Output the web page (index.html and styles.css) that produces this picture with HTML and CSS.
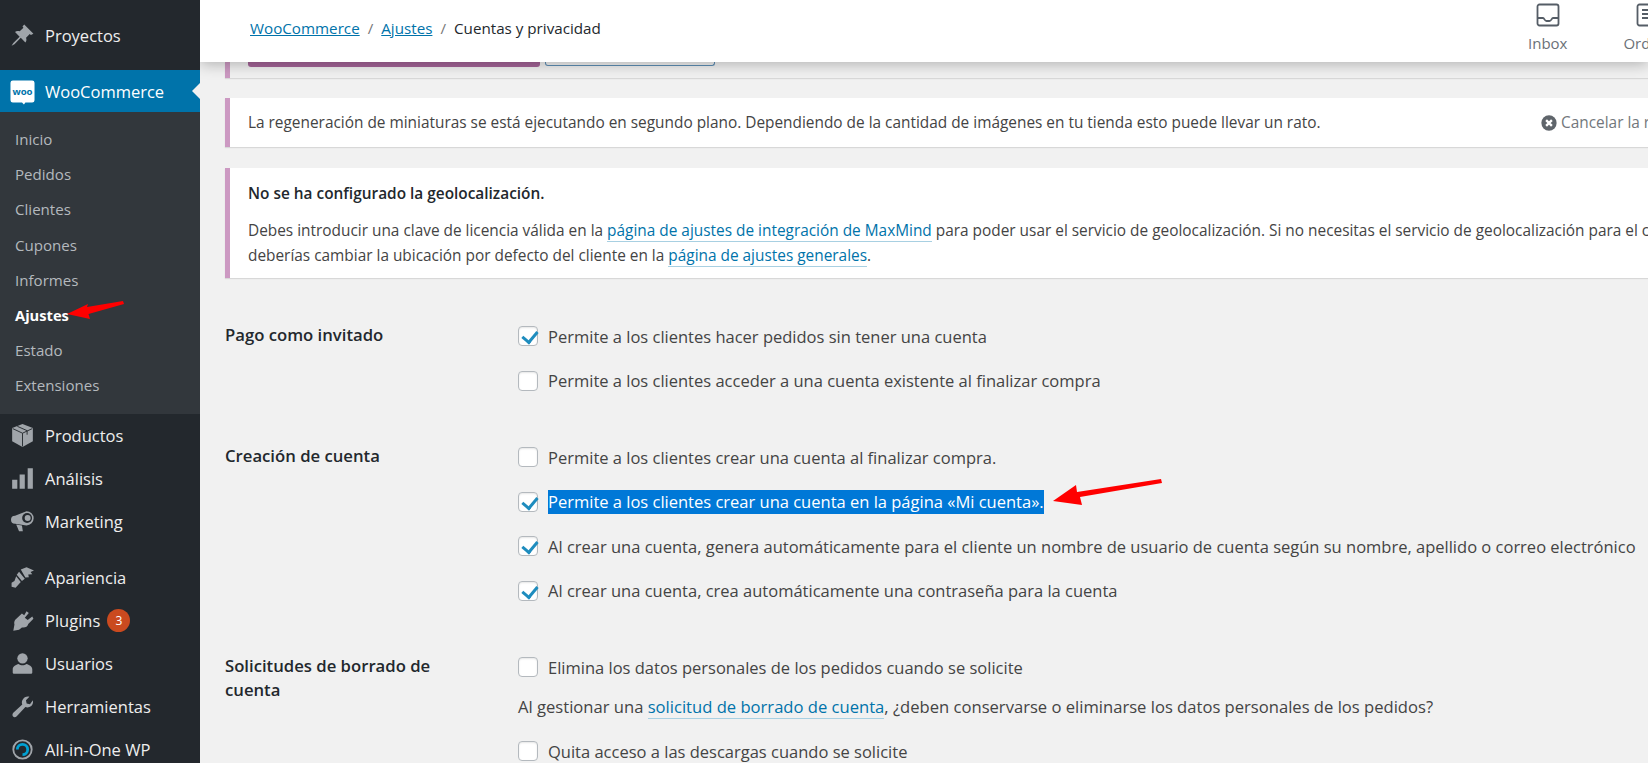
FILE: index.html
```html
<!DOCTYPE html>
<html lang="es">
<head>
  <meta charset="UTF-8">
  <title>Cuentas y privacidad</title>
  <link rel="stylesheet" href="styles.css">
</head>
<body>
  <aside class="sidebar">
    <a class="menu-item first">
      <svg class="menu-icon" viewBox="0 0 20 20"><path d="M11.500 0.500l8 8-2.200 1-1-.8-3.200 3.200c.6 1.800.3 3.200-.6 4.100L8.500 12l-5.500 5.500-2.500 1.500 1.500-2.500L7.500 11 3.500 7c.9-.9 2.300-1.200 4.100-.6l3.200-3.200-.8-1z"/></svg>
      <span>Proyectos</span>
    </a>
    <a class="menu-item woo">
      <svg class="menu-icon woo-icon" viewBox="0 0 26 26"><path d="M3 1h20a2.500 2.500 0 0 1 2.500 2.500v18a2.500 2.500 0 0 1-2.500 2.500h-7l-1.500 2-2-2H3a2.500 2.500 0 0 1-2.500-2.500v-18A2.500 2.500 0 0 1 3 1z" fill="#fff"/><text x="13" y="16" class="woo-text">woo</text></svg>
      <span>WooCommerce</span>
    </a>
    <nav class="submenu">
      <a>Inicio</a>
      <a>Pedidos</a>
      <a>Clientes</a>
      <a>Cupones</a>
      <a>Informes</a>
      <a class="current">Ajustes</a>
      <a>Estado</a>
      <a>Extensiones</a>
    </nav>
    <a class="menu-item">
      <svg class="menu-icon" viewBox="0 0 20 20"><path d="M10 0l9 3.500v11.500l-9 5-9-5V3.500z"/><path d="M1.500 4L10 8l8.500-4M5.500 2l8.500 3.800v3.500M10 8v11.500" fill="none" stroke="#23282d" stroke-width=".8"/></svg>
      <span>Productos</span>
    </a>
    <a class="menu-item">
      <svg class="menu-icon" viewBox="0 0 20 20"><path d="M1 11h4.500v8H1zM7.500 6.500H12V19H7.500zM14.500 1H19v18h-4.500z"/></svg>
      <span>Análisis</span>
    </a>
    <a class="menu-item">
      <svg class="menu-icon" viewBox="0 0 20 20"><path d="M13.500 1a6.200 6.200 0 0 1 0 12.400L3.500 12a3.500 3.500 0 0 1 0-7z"/><circle cx="14" cy="7" r="4.300" fill="#23282d"/><circle cx="14.500" cy="7" r="2.600"/><path d="M4.500 12.500l5 1 .8 5H7z"/></svg>
      <span>Marketing</span>
    </a>
    <a class="menu-item gap">
      <svg class="menu-icon" viewBox="0 0 20 20"><path d="M8.500 3l5-2 6.500 3-3 1.200 1.500 2-3.500.2.500 2.300-3 .3z"/><path d="M7 5l5 6-2.500 2-4.500-5.500zM4.500 9l4 5-4.500 5-3.500-1 0-3.500 2.500-1.500z"/></svg>
      <span>Apariencia</span>
    </a>
    <a class="menu-item">
      <svg class="menu-icon" viewBox="0 0 20 20"><path d="M13.500 2l2 1.500-3.500 4 2.500 2 4-3 1 2-4.500 4.500c-.5 2.500-3 3.500-5.500 3L7 18l-5 1 1-5.500c-.5-1.500 0-3 .5-4l6-5.500 2 1.500z"/></svg>
      <span>Plugins</span><b class="count">3</b>
    </a>
    <a class="menu-item">
      <svg class="menu-icon" viewBox="0 0 20 20"><circle cx="10" cy="5.500" r="4.500"/><path d="M1.500 18v-3c0-2.500 3-4 5-4.500 2 1.500 5 1.500 7 0 2 .5 5 2 5 4.500v3a1 1 0 0 1-1 1h-15a1 1 0 0 1-1-1z"/></svg>
      <span>Usuarios</span>
    </a>
    <a class="menu-item">
      <svg class="menu-icon" viewBox="0 0 20 20"><path d="M19 4.500c.6 2.500-.3 5-3 6-1.400.5-2.500.3-3.500 0L5 18.500c-1 1-2.500 1-3.200.2S1 16.500 2 15.500l7.800-7.200c-.5-1.300-.5-2.800.2-4 1.200-2.300 3.500-3.300 6-2.800l-3 3 .6 2.900 2.900.6z"/></svg>
      <span>Herramientas</span>
    </a>
    <a class="menu-item">
      <svg class="menu-icon" viewBox="0 0 20 20"><circle cx="10" cy="10" r="8" fill="none" stroke="#a0a5aa" stroke-width="1.600"/><path d="M5.500 10a4.500 4.500 0 1 1 4.500 4.500" fill="none" stroke="#00a0d2" stroke-width="2.400"/></svg>
      <span>All-in-One WP</span>
    </a>
  </aside>

  <div class="main">
    <header class="topbar">
      <div class="crumbs">
        <a>WooCommerce</a><i>/</i><a>Ajustes</a><i>/</i><span>Cuentas y privacidad</span>
      </div>
      <div class="activity">
        <div class="activity-item">
          <svg viewBox="0 0 24 24"><path d="M3.500 1.500h17a2 2 0 0 1 2 2v17a2 2 0 0 1-2 2h-17a2 2 0 0 1-2-2v-17a2 2 0 0 1 2-2z" fill="none" stroke="#555d66" stroke-width="1.800"/><path d="M2 15h5c1.500 0 1.500 3 3.500 3h3c2 0 2-3 3.500-3h5" fill="none" stroke="#555d66" stroke-width="1.800"/></svg>
          <span>Inbox</span>
        </div>
        <div class="activity-item">
          <svg viewBox="0 0 24 24"><path d="M3.500 1.500h17a2 2 0 0 1 2 2v17a2 2 0 0 1-2 2h-17a2 2 0 0 1-2-2v-17a2 2 0 0 1 2-2z" fill="none" stroke="#555d66" stroke-width="1.800"/><path d="M6 7h6M6 11h6M6 15h12" stroke="#555d66" stroke-width="1.800"/></svg>
          <span>Orders</span>
        </div>
      </div>
    </header>

    <div class="content">
      <div class="notice stub">
        <span class="stub-primary"></span><span class="stub-secondary"></span>
      </div>

      <div class="notice notice-row">
        <p>La regeneración de miniaturas se está ejecutando en segundo plano. Dependiendo de la cantidad de imágenes en tu tienda esto puede llevar un rato.</p>
        <a class="cancel">
          <svg viewBox="0 0 20 20"><circle cx="10" cy="10" r="8.500"/><path d="M6.800 6.800l6.400 6.400M13.200 6.800l-6.400 6.400" stroke="#fff" stroke-width="2.600"/></svg>
          Cancelar la regeneración
        </a>
      </div>

      <div class="notice notice-geo">
        <p class="notice-title">No se ha configurado la geolocalización.</p>
        <p class="notice-body">Debes introducir una clave de licencia válida en la <a>página de ajustes de integración de MaxMind</a> para poder usar el servicio de geolocalización. Si no necesitas el servicio de geolocalización para el cálculo de impuestos,<br>deberías cambiar la ubicación por defecto del cliente en la <a>página de ajustes generales</a>.</p>
      </div>

      <div class="form-row first-row">
        <div class="form-label">Pago como invitado</div>
        <div class="form-options">
          <label class="check"><span class="box on"></span>Permite a los clientes hacer pedidos sin tener una cuenta</label>
          <label class="check"><span class="box"></span>Permite a los clientes acceder a una cuenta existente al finalizar compra</label>
        </div>
      </div>

      <div class="form-row">
        <div class="form-label">Creación de cuenta</div>
        <div class="form-options">
          <label class="check"><span class="box"></span>Permite a los clientes crear una cuenta al finalizar compra.</label>
          <label class="check"><span class="box on"></span><span class="selected">Permite a los clientes crear una cuenta en la página «Mi cuenta».</span></label>
          <label class="check"><span class="box on"></span>Al crear una cuenta, genera automáticamente para el cliente un nombre de usuario de cuenta según su nombre, apellido o correo electrónico</label>
          <label class="check"><span class="box on"></span>Al crear una cuenta, crea automáticamente una contraseña para la cuenta</label>
        </div>
      </div>

      <div class="form-row">
        <div class="form-label">Solicitudes de borrado de cuenta</div>
        <div class="form-options">
          <label class="check"><span class="box"></span>Elimina los datos personales de los pedidos cuando se solicite</label>
          <p class="help">Al gestionar una <a>solicitud de borrado de cuenta</a>, ¿deben conservarse o eliminarse los datos personales de los pedidos?</p>
          <label class="check"><span class="box"></span>Quita acceso a las descargas cuando se solicite</label>
        </div>
      </div>
    </div>
  </div>

  <!-- red annotation arrows -->
  <svg class="arrow arrow-side" viewBox="0 0 60 24"><path d="M56 2L20 8l1-3L0 15l23 5-1.500-5L57 5z" fill="#f00"/></svg>
  <svg class="arrow arrow-main" viewBox="0 0 110 26"><path d="M108 0L24 13l-1-7L0 22l29 4-2-8 82-14z" fill="#f00"/></svg>
</body>
</html>
```

FILE: styles.css
```css
* {
  box-sizing: border-box;
}
html, body {
  height: 763px;
  overflow: hidden;
}
body {
  margin: 0;
  display: flex;
  position: relative;
  background: #f1f1f1;
  color: #444;
  font-family: "Open Sans", "Liberation Sans", sans-serif;
  font-size: 15.400px;
}
p {
  margin: 0;
}
a {
  color: #0073aa;
}

/* sidebar */
.sidebar {
  width: 200px;
  flex: none;
  background: #23282d;
  color: #eee;
  overflow: hidden;
  font-size: 16.500px;
}
.menu-item {
  display: flex;
  align-items: center;
  height: 43px;
  padding-left: 11px;
  color: #eee;
}
.menu-item.first {
  height: 70px;
}
.menu-item.gap {
  margin-top: 13px;
}
.menu-icon {
  width: 23px;
  height: 23px;
  margin-right: 11px;
  fill: #a0a5aa;
  flex: none;
}
.woo {
  height: 42px;
  background: #0073aa;
  color: #fff;
  position: relative;
}
.woo:after {
  content: "";
  position: absolute;
  right: 0;
  top: 13px;
  border: 8px solid transparent;
  border-right-color: #f1f1f1;
  border-left-width: 0;
}
.woo-icon {
  width: 25px;
  height: 26px;
  margin: 2px 10px 0 -1px;
}
.woo-text {
  fill: #0073aa;
  font-size: 10px;
  font-weight: 700;
  text-anchor: middle;
}
.submenu {
  background: #32373c;
  height: 302px;
  padding-top: 10px;
}
.submenu a {
  display: block;
  height: 35.200px;
  line-height: 35px;
  padding-left: 15px;
  font-size: 15.100px;
  color: #b4b9be;
}
.submenu a.current {
  color: #fff;
  font-size: 14.700px;
  font-weight: 700;
}
.count {
  width: 23px;
  height: 23px;
  margin-left: 7px;
  border-radius: 50%;
  background: #ca4a1f;
  color: #fff;
  font-size: 12px;
  font-weight: 400;
  line-height: 23px;
  text-align: center;
}

/* top bar */
.main {
  flex: 1;
  min-width: 0;
  overflow: hidden;
}
.topbar {
  height: 62px;
  background: #fff;
  display: flex;
  justify-content: space-between;
  position: relative;
  box-shadow: 0 2px 14px rgba(0, 0, 0, .28);
}
.crumbs {
  padding: 18px 0 0 50px;
  color: #23282d;
  font-size: 15.200px;
}
.crumbs a {
  color: #0073aa;
  text-decoration: underline;
}
.crumbs i {
  font-style: normal;
  color: #777;
  margin: 0 8px;
}
.activity {
  display: flex;
  flex: none;
  width: 120px;
  gap: 56px;
  padding: 3px 0 0 0;
  overflow: hidden;
}
.activity-item {
  display: flex;
  flex-direction: column;
  align-items: center;
  color: #6b7178;
  font-size: 15px;
}
.activity-item svg {
  width: 24px;
  height: 24px;
  margin-bottom: 6px;
}

/* notices */
.content {
  padding-left: 25px;
  width: 1500px;
}
.notice {
  background: #fff;
  border-left: 5px solid #cc99c2;
  box-shadow: 0 1px 1px rgba(0, 0, 0, .1);
}
.stub {
  height: 16px;
  background: transparent;
  padding-left: 18px;
  display: flex;
  gap: 5px;
}
.stub-primary {
  width: 292px;
  height: 5px;
  background: #a46497;
  border-radius: 0 0 3px 3px;
}
.stub-secondary {
  width: 170px;
  height: 4px;
  border: 1px solid #5e8eb5;
  border-top: 0;
  border-radius: 0 0 3px 3px;
}
.notice-row {
  margin-top: 20px;
  height: 49px;
  padding-left: 18px;
  display: flex;
  align-items: center;
}
.notice-row p {
  width: 1292px;
  flex: none;
  white-space: nowrap;
}
.cancel {
  display: flex;
  align-items: center;
  gap: 3px;
  color: #72777c;
  white-space: nowrap;
}
.cancel svg {
  width: 18px;
  height: 18px;
  fill: #5f656b;
}
.notice-geo {
  margin-top: 21px;
  height: 110px;
  padding: 15px 0 0 18px;
  white-space: nowrap;
}
.notice-title {
  color: #23282d;
  font-weight: 600;
  margin-bottom: 14px;
}
.notice-body {
  line-height: 25px;
}
.notice-body a, .help a {
  border-bottom: 1px solid #a8d0e2;
}

/* settings form */
.form-row {
  display: flex;
  margin-top: 32px;
  font-size: 16.500px;
}
.form-row.first-row {
  margin-top: 36px;
}
.form-label {
  width: 293px;
  flex: none;
  padding-right: 50px;
  padding-top: 9px;
  color: #23282d;
  font-size: 16.700px;
  font-weight: 600;
  line-height: 24px;
}
.form-options {
  display: flex;
  flex-direction: column;
}
.check {
  display: flex;
  align-items: center;
  height: 44.500px;
  white-space: nowrap;
}
.box {
  width: 20px;
  height: 20px;
  flex: none;
  margin-right: 10px;
  background: #fff;
  border: 1px solid #b4b9be;
  border-radius: 4px;
  box-shadow: inset 0 1px 2px rgba(0, 0, 0, .1);
  position: relative;
}
.box.on:after {
  content: "";
  position: absolute;
  left: 6px;
  top: 1px;
  width: 7px;
  height: 12px;
  border: solid #1e8cbe;
  border-width: 0 3px 3px 0;
  transform: rotate(40deg);
}
.selected {
  background: #0078d7;
  color: #fff;
  line-height: 24px;
}
.help {
  height: 33.500px;
  font-size: 16.600px;
  line-height: 33px;
  margin-bottom: 6px;
  white-space: nowrap;
}

/* annotation arrows */
.arrow {
  position: absolute;
}
.arrow-side {
  left: 67px;
  top: 299px;
  width: 60px;
  height: 24px;
}
.arrow-main {
  left: 1053px;
  top: 479px;
  width: 110px;
  height: 26px;
}
```
